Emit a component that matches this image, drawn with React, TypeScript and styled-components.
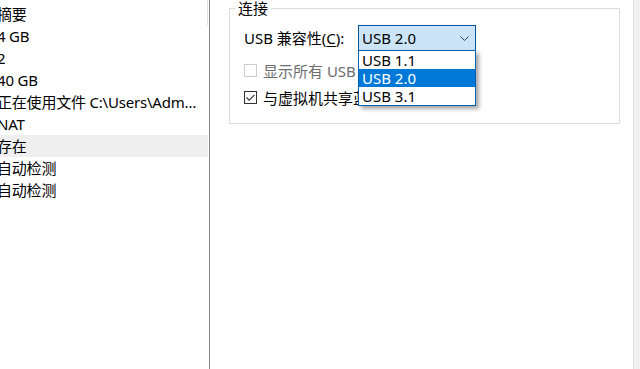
import React from "react";
import styled, { createGlobalStyle } from "styled-components";

// Global
const GlobalStyle = createGlobalStyle`
  html, body {
    margin: 0;
    padding: 0;
    background: #fff;
  }
  body {
    font-family: "Noto Sans", "Noto Sans CJK SC", sans-serif;
    font-size: 15px;
    color: #000;
  }
`;

// Layout
const Window = styled.div`
  display: flex;
  width: 640px;
  height: 369px;
  overflow: hidden;
  background: #fff;
`;

const DeviceList = styled.ul`
  position: relative;
  flex: 0 0 209px;
  margin: 0;
  padding: 3px 0 0;
  list-style: none;
  border-right: 1px solid #8a8a8a;
  overflow: hidden;

  &::after {
    content: "";
    position: absolute;
    top: 0;
    right: 1px;
    width: 1px;
    height: 25px;
    background: #e2e2e2;
  }
`;

const DeviceRow = styled.li<{ $selected?: boolean }>`
  height: 22px;
  line-height: 22px;
  margin-right: 1px;
  padding-right: 8px;
  background: ${(p) => (p.$selected ? "#efefef" : "transparent")};
  white-space: nowrap;
  overflow: hidden;
  text-overflow: ellipsis;
  text-indent: -3px;
  letter-spacing: -0.2px;
`;

const SettingsPane = styled.div`
  flex: 1;
  padding: 0 13px 0 19px;
`;

const ScrollTrack = styled.div`
  flex: 0 0 6px;
  background: #f0f0f0;
  border-left: 1px solid #e3e3e3;
`;

// Group box
const GroupBox = styled.fieldset`
  margin: 0;
  min-width: 0;
  border: 1px solid #dcdcdc;
  padding: 9px 14px 13px;
`;

const GroupTitle = styled.legend`
  margin-left: -9px;
  padding: 0 3px;
  line-height: 16px;
`;

const FieldRow = styled.div`
  display: flex;
  align-items: center;
  height: 26px;
`;

const FieldLabel = styled.label`
  flex: 0 0 114px;
  line-height: 20px;
`;

const AccessKey = styled.span`
  text-decoration: underline;
  text-underline-offset: 2px;
`;

// Combo box
const Combo = styled.div`
  position: relative;
  box-sizing: border-box;
  width: 118px;
  height: 26px;
  display: flex;
  align-items: center;
  justify-content: space-between;
  padding: 0 6px 0 3px;
  background: #cce4f7;
  border: 1px solid #005499;
`;

const ComboValue = styled.span`
  line-height: 20px;
  color: #000;
`;

const ComboPopup = styled.ul`
  position: absolute;
  z-index: 2;
  top: 100%;
  left: -1px;
  box-sizing: border-box;
  width: 118px;
  margin: 0;
  padding: 0;
  list-style: none;
  background: #fff;
  border: 1px solid #0063b1;
  box-shadow: 3px 3px 4px rgba(0, 0, 0, 0.35);
`;

const ComboOption = styled.li<{ $active?: boolean }>`
  height: 18px;
  line-height: 18px;
  padding-left: 3px;
  background: ${(p) => (p.$active ? "#0078d7" : "#fff")};
  color: ${(p) => (p.$active ? "#fff" : "#000")};
`;

// Check boxes
const CheckRow = styled.div<{ $first?: boolean }>`
  display: flex;
  align-items: center;
  gap: 6px;
  height: 25px;
  margin-top: ${(p) => (p.$first ? "7px" : "2px")};
  white-space: nowrap;
`;

const CheckBox = styled.span<{ $disabled?: boolean }>`
  box-sizing: border-box;
  flex: 0 0 13px;
  width: 13px;
  height: 13px;
  display: flex;
  align-items: center;
  justify-content: center;
  border: 1px solid ${(p) => (p.$disabled ? "#cccccc" : "#333333")};
  background: #fff;
`;

const CheckText = styled.span<{ $disabled?: boolean }>`
  line-height: 20px;
  color: ${(p) => (p.$disabled ? "#6d6d6d" : "#000")};
`;

const devices = [
  "摘要",
  "4 GB",
  "2",
  "40 GB",
  "正在使用文件 C:\\Users\\Administrator\\Documents\\Virtual Machines",
  "NAT",
  "存在",
  "自动检测",
  "自动检测",
];

const usbVersions = ["USB 1.1", "USB 2.0", "USB 3.1"];

const Chevron = () => (
  <svg width="9" height="5" viewBox="0 0 9 5">
    <path d="M0.5 0.5 L4.5 4.5 L8.5 0.5" fill="none" stroke="#404040" strokeWidth="1" />
  </svg>
);

const Tick = () => (
  <svg width="11" height="11" viewBox="0 0 11 11">
    <path d="M1.5 5.5 L4.2 8.2 L9.5 2.8" fill="none" stroke="#333" strokeWidth="1.1" />
  </svg>
);

const App = () => (
  <>
    <GlobalStyle />
    <Window>
      <DeviceList>
        {devices.map((d, i) => (
          <DeviceRow key={i} $selected={i === 6}>
            {d}
          </DeviceRow>
        ))}
      </DeviceList>
      <SettingsPane>
        <GroupBox>
          <GroupTitle>连接</GroupTitle>
          <FieldRow>
            <FieldLabel>
              USB 兼容性(<AccessKey>C</AccessKey>):
            </FieldLabel>
            <Combo>
              <ComboValue>USB 2.0</ComboValue>
              <Chevron />
              <ComboPopup>
                {usbVersions.map((v) => (
                  <ComboOption key={v} $active={v === "USB 2.0"}>
                    {v}
                  </ComboOption>
                ))}
              </ComboPopup>
            </Combo>
          </FieldRow>
          <CheckRow $first>
            <CheckBox $disabled />
            <CheckText $disabled>显示所有 USB 输入设备</CheckText>
          </CheckRow>
          <CheckRow>
            <CheckBox>
              <Tick />
            </CheckBox>
            <CheckText>与虚拟机共享蓝牙设备</CheckText>
          </CheckRow>
        </GroupBox>
      </SettingsPane>
      <ScrollTrack />
    </Window>
  </>
);

export default App;
